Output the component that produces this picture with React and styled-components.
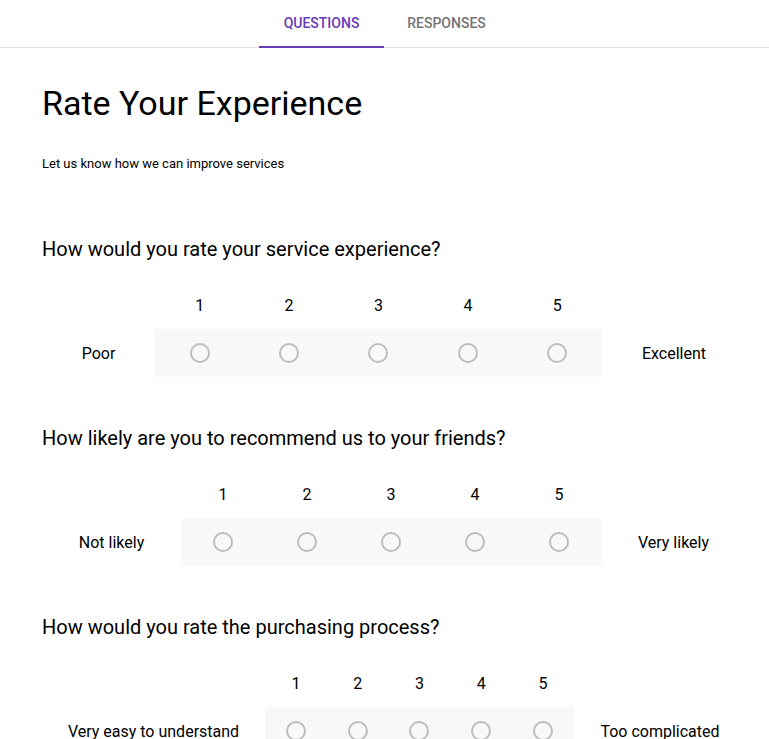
import React from "react";
import styled, { createGlobalStyle } from "styled-components";

const Global = createGlobalStyle`
  html, body { margin: 0; padding: 0; overflow: hidden; background: #fff; }
  body { font-family: Roboto, "Liberation Sans", Arial, sans-serif; color: #212121; }
`;

const TabBar = styled.nav`
  display: flex;
  justify-content: center;
  border-bottom: 1px solid #e0e0e0;
  height: 47px;
  padding-right: 1px;
`;

const Tab = styled.div`
  width: 125px;
  box-sizing: border-box;
  height: 48px;
  line-height: 46px;
  text-align: center;
  font-size: 14px;
  font-weight: 500;
  text-transform: uppercase;
  color: ${(p) => (p.$active ? "#673ab7" : "#757575")};
  border-bottom: 2px solid ${(p) => (p.$active ? "#673ab7" : "transparent")};
  position: relative;
  z-index: 1;
`;

const Main = styled.main`
  padding: 36px 0 0 42px;
  display: flex;
  flex-direction: column;
`;

const Title = styled.h1`
  margin: 0;
  font-size: 34px;
  line-height: 38px;
  font-weight: 400;
  color: #000;
`;

const Subtitle = styled.p`
  margin: 32px 0 0;
  font-size: 13px;
  line-height: 20px;
  color: #000;
`;

const Questions = styled.div`
  margin-top: 61px;
  display: flex;
  flex-direction: column;
  gap: 47px;
`;

const Question = styled.section`
  display: flex;
  flex-direction: column;
  gap: 18px;
`;

const QuestionTitle = styled.h2`
  margin: 0;
  font-size: 20px;
  line-height: 28px;
  font-weight: 400;
  color: #000;
`;

const Scale = styled.div`
  width: 704px;
  display: grid;
  grid-template-columns: ${(p) => `${p.$left}px repeat(5, 1fr) ${p.$right}px`};
  grid-template-rows: 48px 48px;
`;

const Cell = styled.div`
  display: flex;
  align-items: center;
  justify-content: center;
  font-size: 16px;
  color: #000;
  background: ${(p) => (p.$shaded ? "#f8f8f8" : "transparent")};
`;

const Radio = styled.span`
  width: 20px;
  height: 20px;
  box-sizing: border-box;
  border-radius: 50%;
  border: 2px solid #bdbdbd;
`;

const questions = [
  { title: "How would you rate your service experience?", low: "Poor", high: "Excellent", left: 113, right: 144 },
  { title: "How likely are you to recommend us to your friends?", low: "Not likely", high: "Very likely", left: 139, right: 145 },
  { title: "How would you rate the purchasing process?", low: "Very easy to understand", high: "Too complicated", left: 223, right: 172 },
];

const nums = [1, 2, 3, 4, 5];

export default function App() {
  return (
    <>
      <Global />
      <TabBar>
        <Tab $active>Questions</Tab>
        <Tab>Responses</Tab>
      </TabBar>
      <Main>
        <Title>Rate Your Experience</Title>
        <Subtitle>Let us know how we can improve services</Subtitle>
        <Questions>
          {questions.map((q) => (
            <Question key={q.title}>
              <QuestionTitle>{q.title}</QuestionTitle>
              <Scale $left={q.left} $right={q.right}>
                <Cell />
                {nums.map((n) => (
                  <Cell key={n}>{n}</Cell>
                ))}
                <Cell />
                <Cell>{q.low}</Cell>
                {nums.map((n) => (
                  <Cell key={n} $shaded>
                    <Radio />
                  </Cell>
                ))}
                <Cell>{q.high}</Cell>
              </Scale>
            </Question>
          ))}
        </Questions>
      </Main>
    </>
  );
}
